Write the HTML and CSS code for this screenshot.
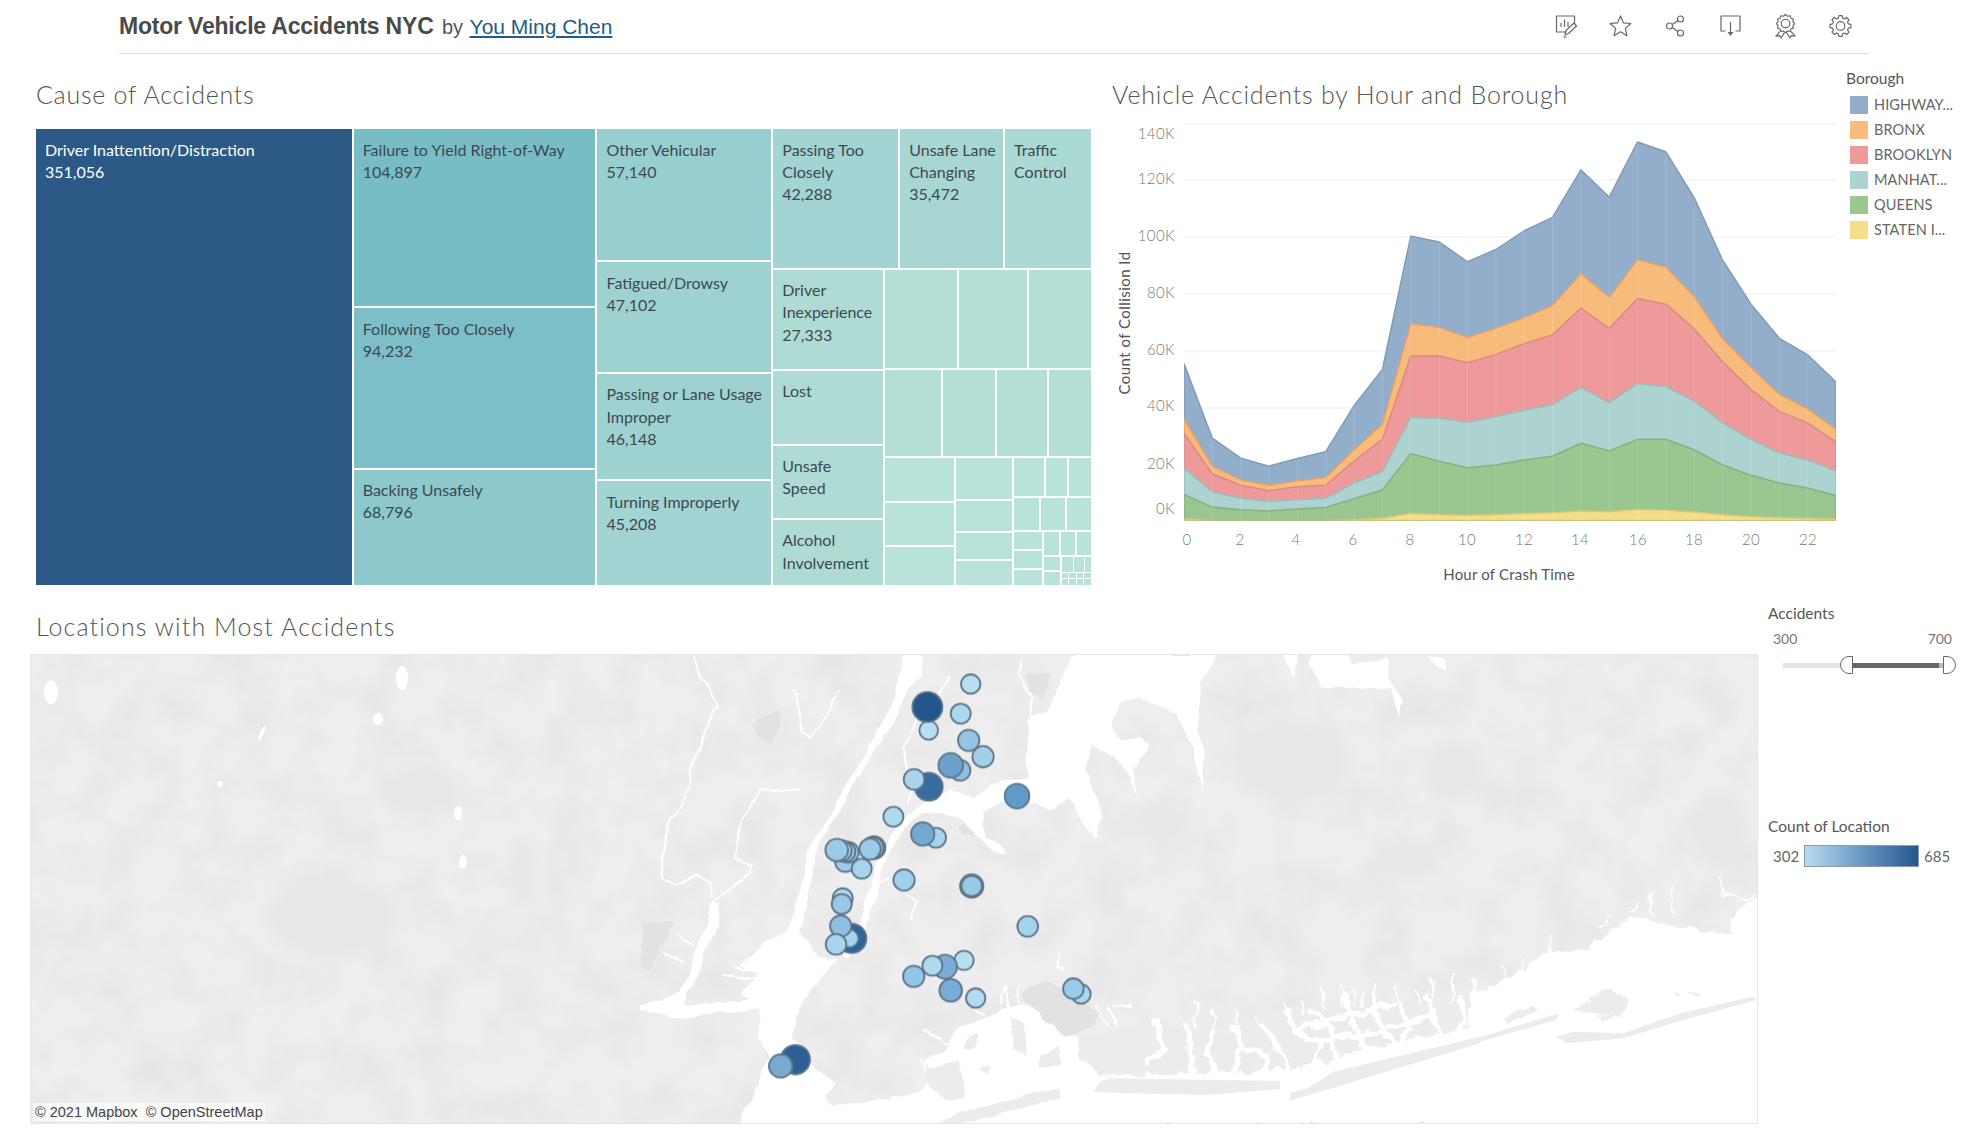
FILE: index.html
```html
<!DOCTYPE html>
<html lang="en">
<head>
<meta charset="utf-8">
<title>Motor Vehicle Accidents NYC</title>
<link rel="stylesheet" href="styles.css">
</head>
<body>
<header class="topbar">
  <div class="heading"><span class="heading-main">Motor Vehicle Accidents NYC</span> <span class="heading-by">by</span> <a class="heading-author" href="#">You Ming Chen</a></div>
  <div class="tools">
    <svg class="tool" viewBox="0 0 22 24"><path d="M12 18H2V2h18v8"/><path d="M6.500 13V9M10 13V5.500M13.500 13V8"/><path d="M10.500 21l1-4.500 8-7.500 2.500 3-8 7.500z"/><path d="M9 23h3" /></svg>
    <svg class="tool" viewBox="0 0 24 24"><path d="M12 1.500l3.100 7.200 7.700.7-5.800 5.100 1.700 7.600-6.700-4-6.700 4 1.700-7.600-5.800-5.100 7.700-.7z"/></svg>
    <svg class="tool" viewBox="0 0 20 24"><circle cx="15" cy="5" r="3"/><circle cx="4" cy="12" r="3"/><circle cx="15" cy="19" r="3"/><path d="M6.700 10.500l5.700-4M6.700 13.500l5.700 4"/></svg>
    <svg class="tool" viewBox="0 0 22 24"><path d="M6 17H1.500V2h19v15H16"/><path d="M11 8v10"/><path class="solid" d="M8 18h6l-3 4z"/></svg>
    <svg class="tool" viewBox="0 0 24 24"><polygon points="21.500,9.500 19.730,11.570 20.230,14.250 17.660,15.160 16.750,17.730 14.070,17.230 12,19 9.930,17.230 7.250,17.730 6.340,15.160 3.770,14.250 4.270,11.570 2.500,9.500 4.270,7.430 3.770,4.750 6.340,3.840 7.250,1.270 9.930,1.770 12,0 14.070,1.770 16.750,1.270 17.660,3.840 20.230,4.750 19.730,7.430"/><circle cx="12" cy="9.500" r="4.500"/><path d="M6.500 17.500L2 22.500l4-.5 1.500 2.500 3.500-6M17.500 17.500l4.500 5-4-.5-1.500 2.500-3.500-6"/></svg>
    <svg class="tool" viewBox="0 0 24 24"><polygon points="20.210,9.800 22.860,10.280 22.860,13.720 20.210,14.200 19.360,16.250 20.900,18.470 18.470,20.900 16.250,19.360 14.200,20.210 13.720,22.860 10.280,22.860 9.800,20.210 7.750,19.360 5.530,20.900 3.100,18.470 4.640,16.250 3.790,14.200 1.140,13.720 1.140,10.280 3.790,9.800 4.640,7.750 3.100,5.530 5.530,3.100 7.750,4.640 9.800,3.790 10.280,1.140 13.720,1.140 14.200,3.790 16.250,4.640 18.470,3.100 20.900,5.530 19.360,7.750"/><circle cx="12" cy="12" r="4.500"/></svg>
  </div>
</header>

<section class="upper">
  <div class="tree-panel">
    <h2 class="view-title tree-title">Cause of Accidents</h2>
    <div class="treemap row">
      <div class="c c1 tdark" style="flex:316"><span>Driver Inattention/Distraction</span><span>351,056</span></div>
      <div class="col" style="flex:242">
        <div class="c c2" style="flex:178"><span>Failure to Yield Right-of-Way</span><span>104,897</span></div>
        <div class="c c3" style="flex:160"><span>Following Too Closely</span><span>94,232</span></div>
        <div class="c c4" style="flex:116"><span>Backing Unsafely</span><span>68,796</span></div>
      </div>
      <div class="col" style="flex:174">
        <div class="c c5" style="flex:132"><span>Other Vehicular</span><span>57,140</span></div>
        <div class="c c6" style="flex:110"><span>Fatigued/Drowsy</span><span>47,102</span></div>
        <div class="c c6" style="flex:106"><span>Passing or Lane Usage<br>Improper</span><span>46,148</span></div>
        <div class="c c7" style="flex:104"><span>Turning Improperly</span><span>45,208</span></div>
      </div>
      <div class="col" style="flex:318">
        <div class="row" style="flex:139">
          <div class="c c7" style="flex:125"><span>Passing Too<br>Closely</span><span>42,288</span></div>
          <div class="c c8" style="flex:103"><span>Unsafe Lane<br>Changing</span><span>35,472</span></div>
          <div class="c c9" style="flex:86"><span>Traffic<br>Control</span></div>
        </div>
        <div class="row" style="flex:316">
          <div class="col" style="flex:110">
            <div class="c c10" style="flex:100"><span>Driver<br>Inexperience</span><span>27,333</span></div>
            <div class="c c10" style="flex:74"><span>Lost</span></div>
            <div class="c c10" style="flex:73"><span>Unsafe<br>Speed</span></div>
            <div class="c c10" style="flex:66"><span>Alcohol<br>Involvement</span></div>
          </div>
          <div class="col" style="flex:206">
            <div class="row" style="flex:99">
              <div class="c c11" style="flex:72"></div><div class="c c11" style="flex:68"></div><div class="c c11" style="flex:62"></div>
            </div>
            <div class="row" style="flex:87">
              <div class="c c11" style="flex:56"></div><div class="c c11" style="flex:52"></div><div class="c c11" style="flex:50"></div><div class="c c11" style="flex:42"></div>
            </div>
            <div class="row" style="flex:128">
              <div class="col" style="flex:70">
                <div class="c c12" style="flex:44"></div><div class="c c12" style="flex:42"></div><div class="c c12" style="flex:39"></div>
              </div>
              <div class="col" style="flex:56">
                <div class="c c12" style="flex:42"></div><div class="c c12" style="flex:31"></div><div class="c c12" style="flex:26"></div><div class="c c12" style="flex:25"></div>
              </div>
              <div class="col" style="flex:78">
                <div class="row" style="flex:39"><div class="c c12" style="flex:30"></div><div class="c c12" style="flex:22"></div><div class="c c12" style="flex:22"></div></div>
                <div class="row" style="flex:33"><div class="c c12" style="flex:25"></div><div class="c c12" style="flex:25"></div><div class="c c12" style="flex:24"></div></div>
                <div class="row" style="flex:54">
                  <div class="col" style="flex:28"><div class="c c12" style="flex:18"></div><div class="c c12" style="flex:18"></div><div class="c c12" style="flex:16"></div></div>
                  <div class="col" style="flex:48">
                    <div class="row" style="flex:23"><div class="c c12" style="flex:16"></div><div class="c c12" style="flex:15"></div><div class="c c12" style="flex:15"></div></div>
                    <div class="row" style="flex:29">
                      <div class="col" style="flex:17"><div class="c c12" style="flex:15"></div><div class="c c12" style="flex:14"></div></div>
                      <div class="col fine" style="flex:30">
                        <div class="row fine" style="flex:13"><div class="c c12" style="flex:11"></div><div class="c c12" style="flex:10"></div><div class="c c12" style="flex:6"></div></div>
                        <div class="row fine" style="flex:5"><div class="c c12" style="flex:7"></div><div class="c c12" style="flex:7"></div><div class="c c12" style="flex:7"></div><div class="c c12" style="flex:7"></div></div>
                        <div class="row fine" style="flex:5"><div class="c c12" style="flex:7"></div><div class="c c12" style="flex:7"></div><div class="c c12" style="flex:7"></div><div class="c c12" style="flex:7"></div></div>
                      </div>
                    </div>
                  </div>
                </div>
              </div>
            </div>
          </div>
        </div>
      </div>
    </div>
  </div>

  <div class="area-panel">
    <h2 class="view-title area-title">Vehicle Accidents by Hour and Borough</h2>
    <svg class="area-chart" viewBox="1100 120 745 465" width="745" height="465">
      <g class="grid">
        <path d="M1184 124H1836M1184 180H1836M1184 237H1836M1184 294H1836M1184 351H1836M1184 408H1836M1184 465H1836"/>
      </g>
      <svg x="1184" y="122.500" width="652" height="398" viewBox="0 320 23 1040" preserveAspectRatio="none">
        <polygon class="a-high" points="0,950 1,1145 2,1197 3,1218 4,1198 5,1180 6,1060 7,965 8,617 9,632 10,684 11,652 12,603 13,568 14,444 15,515 16,371 17,397 18,517 19,680 20,795 21,884 22,927 23,998 23,1360 0,1360"/>
        <polygon class="a-bronx" points="0,1095 1,1218 2,1254 3,1268 4,1256 5,1248 6,1175 7,1108 8,846 9,855 10,882 11,858 12,830 13,798 14,715 15,777 16,678 17,698 18,775 19,885 20,960 21,1030 22,1068 23,1122 23,1360 0,1360"/>
        <polygon class="a-brook" points="0,1132 1,1238 2,1268 3,1282 4,1272 5,1268 6,1205 7,1148 8,930 9,930 10,948 11,926 12,898 13,875 14,805 15,858 16,780 17,795 18,860 19,945 20,1018 21,1075 22,1105 23,1155 23,1360 0,1360"/>
        <polygon class="a-manh" points="0,1222 1,1285 2,1302 3,1310 4,1306 5,1302 6,1262 7,1232 8,1090 9,1093 10,1103 11,1088 12,1072 13,1057 14,1012 15,1052 16,1002 17,1010 18,1048 19,1105 20,1148 21,1183 22,1202 23,1230 23,1360 0,1360"/>
        <polygon class="a-queen" points="0,1292 1,1325 2,1332 3,1335 4,1330 5,1326 6,1303 7,1280 8,1185 9,1205 10,1222 11,1215 12,1202 13,1192 14,1158 15,1178 16,1148 17,1148 18,1175 19,1215 20,1242 21,1262 22,1275 23,1295 23,1360 0,1360"/>
        <polygon class="a-staten" points="0,1357 1,1360 2,1360 3,1360 4,1360 5,1360 6,1358 7,1354 8,1342 9,1345 10,1346 11,1345 12,1342 13,1340 14,1335 15,1337 16,1331 17,1333 18,1338 19,1345 20,1350 21,1353 22,1355 23,1357 23,1360 0,1360"/>
        <path class="hour-lines" d="M1 320V1360M2 320V1360M3 320V1360M4 320V1360M5 320V1360M6 320V1360M7 320V1360M8 320V1360M9 320V1360M10 320V1360M11 320V1360M12 320V1360M13 320V1360M14 320V1360M15 320V1360M16 320V1360M17 320V1360M18 320V1360M19 320V1360M20 320V1360M21 320V1360M22 320V1360"/>
      </svg>
      <g class="ticks ticks-y">
        <text x="1175" y="139">140K</text><text x="1175" y="184">120K</text><text x="1175" y="241">100K</text><text x="1175" y="298">80K</text><text x="1175" y="355">60K</text><text x="1175" y="411">40K</text><text x="1175" y="469">20K</text><text x="1175" y="514">0K</text>
      </g>
      <g class="ticks ticks-x">
        <text x="1187" y="545">0</text><text x="1240" y="545">2</text><text x="1296" y="545">4</text><text x="1353" y="545">6</text><text x="1410" y="545">8</text><text x="1467" y="545">10</text><text x="1524" y="545">12</text><text x="1580" y="545">14</text><text x="1638" y="545">16</text><text x="1694" y="545">18</text><text x="1751" y="545">20</text><text x="1808" y="545">22</text>
      </g>
      <text class="axis-name" x="1509" y="580" text-anchor="middle">Hour of Crash Time</text>
      <text class="axis-name axis-y" transform="translate(1130 323) rotate(-90)" text-anchor="middle">Count of Collision Id</text>
    </svg>
  </div>

  <aside class="legend">
    <div class="side-title">Borough</div>
    <ul class="legend-list">
      <li><i class="sw s-high"></i>HIGHWAY...</li>
      <li><i class="sw s-bronx"></i>BRONX</li>
      <li><i class="sw s-brook"></i>BROOKLYN</li>
      <li><i class="sw s-manh"></i>MANHAT...</li>
      <li><i class="sw s-queen"></i>QUEENS</li>
      <li><i class="sw s-staten"></i>STATEN I...</li>
    </ul>
  </aside>
</section>

<section class="lower">
  <div class="map-panel">
    <h2 class="view-title map-title">Locations with Most Accidents</h2>
    <div class="map">
      <svg class="map-svg" viewBox="31 655 1726 468" width="1726" height="468">
        <defs>
          <filter id="mottle" x="0" y="0" width="100%" height="100%">
            <feTurbulence type="fractalNoise" baseFrequency=".022" numOctaves="5" seed="7"/>
            <feColorMatrix type="matrix" values="0 0 0 0 .55 0 0 0 0 .55 0 0 0 0 .55 0 0 0 .34 -.13"/>
          </filter>
          <filter id="soft"><feGaussianBlur stdDeviation="7"/></filter>
          <filter id="rough" filterUnits="userSpaceOnUse" x="-200" y="-200" width="2600" height="1800">
            <feTurbulence type="fractalNoise" baseFrequency=".035" numOctaves="4" seed="3" result="n"/>
            <feDisplacementMap in="SourceGraphic" in2="n" scale="9" xChannelSelector="R" yChannelSelector="G"/>
          </filter>
          <filter id="rough2" filterUnits="userSpaceOnUse" x="-200" y="-200" width="2600" height="1800">
            <feTurbulence type="fractalNoise" baseFrequency=".07" numOctaves="4" seed="9" result="n"/>
            <feDisplacementMap in="SourceGraphic" in2="n" scale="12" xChannelSelector="R" yChannelSelector="G"/>
          </filter>
        </defs>
        <rect x="30" y="655" width="1727" height="468" class="land"/>
        <rect x="30" y="655" width="1727" height="468" filter="url(#mottle)"/>
        <g class="patch" filter="url(#soft)">
          <ellipse cx="332" cy="917" rx="66" ry="40"/><ellipse cx="523" cy="873" rx="14" ry="36"/><ellipse cx="410" cy="790" rx="34" ry="22"/>
          <ellipse cx="1290" cy="760" rx="60" ry="40"/><ellipse cx="1455" cy="770" rx="30" ry="30"/><ellipse cx="1410" cy="860" rx="28" ry="20"/><ellipse cx="1160" cy="820" rx="30" ry="16"/><ellipse cx="1720" cy="830" rx="28" ry="40"/>
        </g>
        <g filter="url(#rough)">
        <g transform="translate(640 655) scale(.33334)">
          <path class="darkland" d="M10 810L100 800 30 950 0 940 0 820zM340 210L410 165 420 200 395 260 360 250zM950 520L990 500 1035 545 960 540zM1160 60L1230 60 1210 130 1170 120z"/>
          <path class="water" d="M790 0L850 0 835 60 775 160 740 230 695 300 650 375 600 460 565 520 540 570 525 620 515 690 500 760 480 830 515 880 540 905 590 905 560 950 520 990 490 1040 465 1090 450 1150 480 1170 530 1240 590 1285 550 1320 570 1345 660 1340 780 1320 850 1305 880 1255 850 1210 910 1190 950 1120 1090 1065 1150 1050 1320 1150 1320 1410 290 1410 390 1210 355 1140 355 1040 300 1020 350 960 300 935 370 860 440 830 475 730 490 670 500 590 555 505 590 440 640 360 685 280 725 210 765 120z"/>
          <path class="water" d="M0 1050L50 1040 120 1010 150 940 195 830 215 750 240 750 225 830 190 920 140 1020 130 1050 250 1045 360 1030 360 1060 250 1070 90 1090 0 1065z"/>
          <path class="water" d="M850 450L930 400 1000 430 1090 380 1200 365 1240 440 1080 440 1030 470 1040 550 1090 570 1100 600 1060 590 1010 540 950 490 900 480 850 470z"/>
          <path class="river thick" d="M620 895C660 850 680 790 695 720 705 680 730 590 770 530 800 490 830 460 900 435"/>
          <path class="river" d="M165 5L180 60 240 150 215 170 195 230 155 340 150 400 100 490 65 600 70 670 110 690 170 660 210 680 215 730M460 100L490 220 520 250 600 110M480 400L370 410 300 500 285 610 340 630 330 660 270 700 220 750M830 195L790 270 790 340 820 390 800 440M900 110L925 75M800 720L830 740 810 790M700 690L750 670M1150 20L1140 60 1175 130 1170 190M110 840L160 870M80 890L130 920"/>
          <path class="river" d="M250 960L360 975M285 940L370 960M330 1000L370 985M850 1120L950 1180M840 1210L860 1240M1000 1060L1060 1100M1100 1000L1110 1060M1130 1080L1150 1170M1400 1060L1430 1110"/>
          <path class="darkland" d="M1150 1010L1220 980 1380 1080 1285 1150 1150 1040z"/>
          <path class="landfill" d="M550 1325L650 1320 730 1315 760 1335 660 1345 570 1345zM860 1240L960 1220 970 1330 920 1340 870 1290zM980 1150L1010 1135 1000 1180 970 1180zM1020 1245L1050 1240 1040 1265zM1110 1090L1150 1110 1160 1210 1120 1180zM1200 1200L1260 1170 1300 1180 1260 1240 1200 1240z"/>
          <path class="landfill" d="M880 1405L1000 1360 1200 1310 1350 1275 1440 1270 1440 1290 1360 1300 1200 1340 1000 1400 890 1410z"/>
        </g>
        <g transform="translate(1000 655) scale(.33334)">
          <path class="water" d="M210 0L650 0 600 90 595 170 610 300 605 400 570 260 525 175 405 125 360 145 335 210 365 255 420 245 445 270 400 350 415 430 385 350 345 310 280 265 255 340 290 430 300 490 275 555 220 440 205 430 150 460 80 420 85 300 80 190 140 170 190 60z"/>
          <path class="water" d="M930 0L1050 0 1060 30 1090 20 1165 10 1170 80 1205 130 1200 190 1170 100 1110 100 1060 100 960 95 930 30zM850 0L890 0 880 70zM1280 0L1330 10 1345 50 1320 40z"/>
          <path class="darkland" d="M70 1010L150 985 295 1075 285 1110 215 1145 70 1040z"/>
        </g>
        </g>
        <g filter="url(#rough2)">
        <g transform="translate(1000 655) scale(.33334)">
          <path class="water" d="M180 1150L230 1150 240 1210 360 1240 400 1170 470 1100 490 1130 560 1120 590 1180 640 1130 700 1120 730 1150 790 1110 860 1060 930 1060 1030 1020 1130 1010 1200 1050 1280 1020 1440 1020 1440 1410 180 1410z"/>
          <path class="landfill" d="M240 1150L470 1100 560 1120 640 1130 700 1120 790 1110 860 1060 930 1060 1030 1020 1130 1010 1200 1050 1280 1020 1440 1020 1440 1120 1100 1195 850 1245 500 1258 300 1262 240 1210z"/>
          <path class="river" d="M180 900L180 940M590 1040L585 1110M710 1060L715 1130M770 1080L790 1120M850 1040L860 1090M900 1040L910 1080M960 1000L975 1060M1020 990L1025 1050M1090 1010L1085 1050M1135 980L1130 1030M1250 1000L1255 1040M1300 965L1300 1030M1360 960L1350 1040M1420 965L1420 1020M470 1100L490 1160M340 1060L400 1060M290 1060L330 1110M60 1000L55 1040M10 990L5 1050M640 1060L640 1120M1190 1000L1195 1040M1060 1000L1060 1040"/>
          <path class="channel" d="M470 1100L490 1180 440 1230M560 1120L580 1250M640 1130L620 1200 650 1260M700 1120L720 1170 700 1250M720 1170L800 1200 790 1255M790 1110L830 1170 870 1240M860 1060L880 1130 960 1160 940 1240M930 1060L990 1110 1010 1220M1030 1020L1060 1100 1100 1200M1130 1010L1120 1080 1180 1170M1200 1050L1230 1120 1200 1180M1280 1020L1300 1100 1320 1140M1380 1030L1400 1100 1350 1150M880 1130L1010 1090 1180 1050M960 1160L1120 1130 1300 1080M1000 1220L1200 1170 1440 1120"/>
        </g>
        <g transform="translate(1290 880) scale(.33334)">
          <path class="water" d="M540 345L720 265 760 220 880 215 960 150 1030 110 1090 130 1230 150 1320 160 1340 90 1400 50 1440 50 1440 780 540 780z"/>
          <path class="river" d="M1290 0L1300 40 1370 60 1400 40M1020 90L1040 70M1080 45L1090 110M1150 20L1150 100M930 140L960 110M780 170L770 230M700 230L690 280M640 250L650 290M560 290L550 340"/>
          <path class="landfill" d="M640 410L720 370 750 390 640 440zM850 390L950 330 1020 360 990 410 900 400zM910 415L990 400 960 425z"/>
        </g>
        </g>
        <g transform="translate(1000 655) scale(.33334)">
          <path class="landfill" d="M300 1280L330 1270 840 1278 840 1302 620 1320 280 1312zM845 1350L1000 1250 1440 1145 1440 1165 1110 1265 860 1340z"/>
        </g>
        <g transform="translate(1290 880) scale(.33334)">
          <path class="landfill" d="M0 660L270 570 480 510 800 420 805 400 640 450 480 500 270 560 0 640zM800 470L850 455 1000 460 1170 400 1390 350 1400 360 1180 420 1000 475 830 490zM1150 335L1175 345 1160 350zM1190 335L1230 340 1225 350z"/>
        </g>
        <g class="lakes">
          <ellipse cx="51" cy="692" rx="7" ry="12"/><ellipse cx="402" cy="678" rx="6" ry="12"/><ellipse cx="378" cy="719" rx="5" ry="6"/><ellipse cx="458" cy="813" rx="4" ry="7"/><ellipse cx="463" cy="862" rx="4" ry="7"/><ellipse cx="220" cy="784" rx="3" ry="3"/><ellipse cx="262" cy="733" rx="2" ry="8" transform="rotate(25 262 733)"/>
        </g>
        <g class="marks" transform="translate(640 655) scale(.33334)">
          <circle cx="992" cy="87" r="29" fill="#b7dff2"/>
          <circle cx="962" cy="176" r="30" fill="#acd8ef"/>
          <circle cx="866" cy="226" r="28" fill="#b7dff2"/>
          <circle cx="862" cy="156" r="45" fill="#24568c"/>
          <circle cx="986" cy="256" r="32" fill="#95c5e4"/>
          <circle cx="1029" cy="305" r="32" fill="#a2d0ea"/>
          <circle cx="960" cy="346" r="31" fill="#8fc0e1"/>
          <circle cx="932" cy="331" r="37" fill="#6da1cc"/>
          <circle cx="866" cy="395" r="42" fill="#366c9f"/>
          <circle cx="822" cy="373" r="31" fill="#a8d4ee"/>
          <circle cx="1131" cy="423" r="37" fill="#6199c9"/>
          <circle cx="760" cy="485" r="30" fill="#addaf0"/>
          <circle cx="888" cy="548" r="30" fill="#a8d4ee"/>
          <circle cx="848" cy="537" r="35" fill="#73a8d2"/>
          <circle cx="616" cy="620" r="31" fill="#9ccaea"/>
          <circle cx="665" cy="641" r="30" fill="#a8d4ee"/>
          <circle cx="702" cy="578" r="34" fill="#8fbfe0"/>
          <circle cx="698" cy="579" r="33" fill="#8fbfe0"/>
          <circle cx="690" cy="582" r="32" fill="#9acbe8"/>
          <circle cx="625" cy="592" r="31" fill="#9acbe8"/>
          <circle cx="615" cy="590" r="31" fill="#9acbe8"/>
          <circle cx="603" cy="587" r="32" fill="#9acbe8"/>
          <circle cx="590" cy="585" r="34" fill="#9acbe8"/>
          <circle cx="792" cy="675" r="32" fill="#a0cfe9"/>
          <circle cx="995" cy="693" r="35" fill="#7fa9c4"/>
          <circle cx="995" cy="693" r="31" fill="#97c8e6"/>
          <circle cx="608" cy="730" r="30" fill="#b0d8ee"/>
          <circle cx="605" cy="747" r="30" fill="#98c8e6"/>
          <circle cx="635" cy="850" r="44" fill="#2f6499"/>
          <circle cx="628" cy="850" r="27" fill="#a8d4ee"/>
          <circle cx="602" cy="813" r="32" fill="#8fc0e1"/>
          <circle cx="588" cy="868" r="31" fill="#a8d4ee"/>
          <circle cx="1163" cy="814" r="31" fill="#a3d3ee"/>
          <circle cx="972" cy="916" r="29" fill="#b7dff2"/>
          <circle cx="915" cy="935" r="36" fill="#78acd6"/>
          <circle cx="877" cy="932" r="30" fill="#aedaf0"/>
          <circle cx="821" cy="964" r="32" fill="#93c5e6"/>
          <circle cx="932" cy="1006" r="34" fill="#76acd6"/>
          <circle cx="1007" cy="1029" r="29" fill="#b0dbf0"/>
          <circle cx="1323" cy="1017" r="29" fill="#a9d6ee"/>
          <circle cx="1300" cy="1001" r="31" fill="#98cdea"/>
          <circle cx="466" cy="1214" r="44" fill="#2c6093"/>
          <circle cx="422" cy="1233" r="35" fill="#7aa9d2"/>
        </g>
      </svg>
      <div class="attribution">© 2021 Mapbox&nbsp; © OpenStreetMap</div>
    </div>
  </div>

  <aside class="filters">
    <div class="side-title">Accidents</div>
    <div class="range-labels"><span>300</span><span>700</span></div>
    <div class="slider">
      <div class="track-off"></div>
      <div class="handle handle-l"></div>
      <div class="track-on"></div>
      <div class="track-end"></div>
      <div class="handle handle-r"></div>
    </div>
    <div class="side-title ramp-title">Count of Location</div>
    <div class="ramp-row"><span>302</span><div class="ramp"></div><span>685</span></div>
  </aside>
</section>
</body>
</html>
```

FILE: styles.css
```css
* { box-sizing: border-box; }
html, body { margin: 0; padding: 0; background: #fff; }
body { width: 1988px; height: 1135px; overflow: hidden; font-family: "Lato", "Noto Sans", sans-serif; color: #444; }

.topbar { margin-left: 119px; width: 1750px; height: 54px; border-bottom: 1px solid #e1e1e1; display: flex; align-items: center; justify-content: space-between; padding-right: 17px; }
.heading { font-family: "Liberation Sans", sans-serif; white-space: nowrap; }
.heading-main { font-size: 23px; font-weight: 700; color: #4a4a4a; letter-spacing: -.2px; }
.heading-by { font-size: 20px; color: #555; margin-left: 4px; }
.heading-author { font-size: 21px; color: #1c5d8c; text-decoration: underline; margin-left: 2px; }
.tools { display: flex; gap: 32px; align-items: center; margin-bottom: 2px; }
.tool { width: 23px; height: 24px; fill: none; stroke: #666; stroke-width: 1.200; stroke-linejoin: round; overflow: visible; }
.tool .solid { fill: #666; stroke: none; }

.upper { display: flex; height: 531px; }
.tree-panel { width: 1055px; margin-left: 36px; flex: none; }
.view-title { margin: 0; height: 75px; padding-top: 23px; font-size: 25px; line-height: 34px; font-weight: 300; color: #555; white-space: nowrap; }
.tree-title { letter-spacing: .72px; }

.treemap { height: 456px; }
.row { display: flex; gap: 2px; min-width: 0; min-height: 0; }
.col { display: flex; flex-direction: column; gap: 2px; min-width: 0; min-height: 0; }
.row.fine, .col.fine { gap: 1px; }
.c { min-width: 0; min-height: 0; overflow: hidden; font-size: 16px; line-height: 22.300px; color: #3c4a4f; white-space: nowrap; }
.c span { display: block; padding-left: 9px; }
.c span:first-child { margin-top: 9.500px; }
.tdark { color: #fff; }
.c1 { background: #2c5985; }
.c2 { background: #78bcc6; }
.c3 { background: #7dbfc8; }
.c4 { background: #8dc8cc; }
.c5 { background: #97ced0; }
.c6 { background: #9dd2d1; }
.c7 { background: #a1d4d2; }
.c8 { background: #a8d7d3; }
.c9 { background: #abd9d4; }
.c10 { background: #afdbd5; }
.c11 { background: #b3dfd7; }
.c12 { background: #b9e2da; }

.area-panel { width: 755px; flex: none; }
.area-title { margin-left: 21px; height: 66px; letter-spacing: .8px; }
.area-chart { display: block; margin-left: 9px; overflow: visible; }
.grid path { fill: none; stroke: #f3f3f3; stroke-width: 1.500; }
.area-chart polygon { stroke-width: 1.500; vector-effect: non-scaling-stroke; }
.hour-lines { fill: none; stroke: rgba(255, 255, 255, .14); stroke-width: 1; vector-effect: non-scaling-stroke; }
.a-high { fill: #92aecb; stroke: #7f9cba; }
.a-bronx { fill: #f7bb7c; stroke: #e6a266; }
.a-brook { fill: #ee9a9b; stroke: #d98a86; }
.a-manh { fill: #add3d0; stroke: #98bdba; }
.a-queen { fill: #9ac68f; stroke: #84b27a; }
.a-staten { fill: #f5de8a; stroke: #dcc874; }
.ticks text { font-size: 15px; fill: #7a7a7a; font-weight: 300; letter-spacing: .4px; }
.ticks-y text { text-anchor: end; }
.ticks-x text { text-anchor: middle; }
.axis-name { font-size: 15px; fill: #555; letter-spacing: .2px; }
.axis-y { letter-spacing: .45px; }

.legend { padding-top: 14px; width: 142px; flex: none; }
.side-title { font-size: 15.500px; line-height: 20px; color: #555; white-space: nowrap; }
.legend-list { list-style: none; margin: 4px 0 0; padding: 0 0 0 4px; }
.legend-list li { display: flex; align-items: center; height: 25px; font-size: 14.500px; color: #666; letter-spacing: .1px; white-space: nowrap; }
.sw { width: 18px; height: 18px; margin-right: 6px; flex: none; }
.s-high { background: #92aecb; }
.s-bronx { background: #f7bb7c; }
.s-brook { background: #ee9a9b; }
.s-manh { background: #add3d0; }
.s-queen { background: #9ac68f; }
.s-staten { background: #f5de8a; }

.lower { display: flex; }
.map-panel { width: 1726px; margin-left: 31px; flex: none; }
.map-title { margin-left: 5px; height: 70px; padding-top: 24px; letter-spacing: 1.100px; }
.map { position: relative; width: 1726px; height: 468px; box-shadow: 0 0 0 1px #e6e6e6; }
.map-svg { display: block; }
.land { fill: #eeeeee; }
.patch ellipse { fill: #e8e8e8; }
.darkland { fill: #e2e2e2; }
.landfill { fill: #ebeced; }
.water { fill: #fff; }
.river { fill: none; stroke: #fff; stroke-width: 6; stroke-linejoin: round; stroke-linecap: round; }
.river.thick { stroke-width: 22; }
.channel { fill: none; stroke: #fff; stroke-width: 16; stroke-linejoin: round; stroke-linecap: round; }
.lakes ellipse { fill: #fff; }
.marks circle { stroke: #5f7688; stroke-width: 5.500; }
.attribution { position: absolute; left: 2px; bottom: 2px; padding: 0 2px; background: rgba(255, 255, 255, .75); font-family: "Liberation Sans", sans-serif; font-size: 14.500px; line-height: 18px; color: #444; }

.filters { margin-left: 11px; width: 190px; flex: none; }
.filters .side-title { margin-top: 18px; }
.range-labels { display: flex; justify-content: space-between; padding: 0 0 0 5px; margin-top: 6px; font-size: 14px; line-height: 20px; color: #777; width: 184px; }
.slider { display: flex; align-items: center; width: 188px; height: 18px; margin-top: 7px; margin-left: 15px; }
.track-off { width: 57px; height: 5px; background: #e4e4e4; }
.track-on { width: 86px; height: 5px; background: #666; }
.track-end { width: 4px; height: 5px; background: #bbb; }
.handle { width: 13px; height: 18px; background: #fff; border: 1px solid #666; flex: none; }
.handle-l { border-radius: 9px 0 0 9px; }
.handle-r { border-radius: 0 9px 9px 0; }
.filters .ramp-title { margin-top: 142px; }
.ramp-row { display: flex; align-items: center; margin-top: 9px; font-size: 15px; color: #666; }
.ramp-row span { margin-left: 5px; width: 31px; }
.ramp-row span:last-child { width: auto; }
.ramp { width: 115px; height: 22px; background: linear-gradient(to right, #b7dcf0, #6f9fc8 45%, #24568c); border: 1px solid #8c9ca8; }
```
